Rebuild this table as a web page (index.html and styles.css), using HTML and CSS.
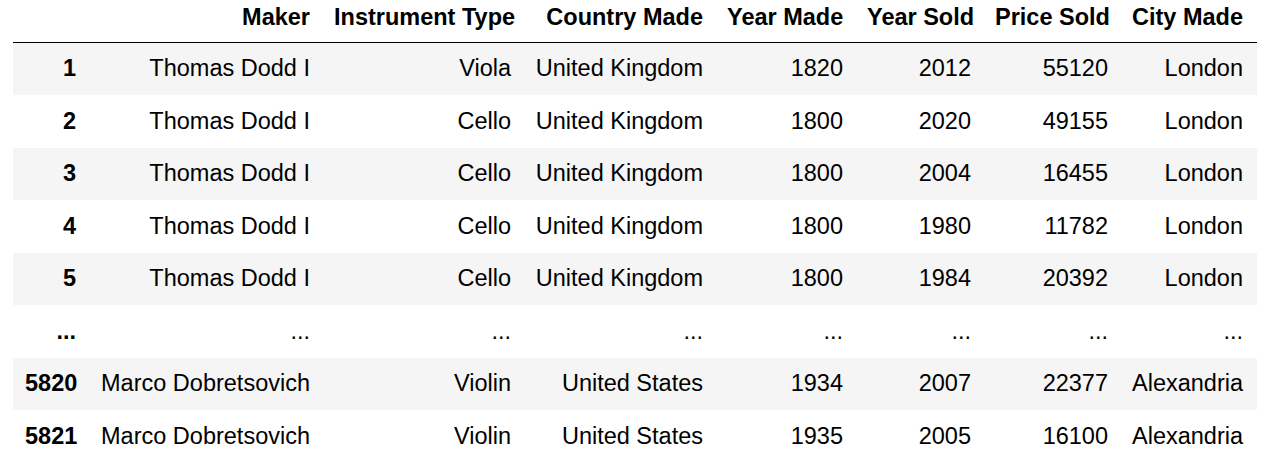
FILE: index.html
```html
<!DOCTYPE html>
<html>
<head>
<meta charset="utf-8">
<link rel="stylesheet" href="styles.css">
</head>
<body>
<table class="df">
  <colgroup>
    <col class="c-idx"><col class="c-maker"><col class="c-type"><col class="c-country"><col class="c-ymade"><col class="c-ysold"><col class="c-price"><col class="c-city">
  </colgroup>
  <thead>
    <tr><th></th><th>Maker</th><th>Instrument Type</th><th>Country Made</th><th>Year Made</th><th>Year Sold</th><th>Price Sold</th><th>City Made</th></tr>
  </thead>
  <tbody>
    <tr><th>1</th><td>Thomas Dodd I</td><td>Viola</td><td>United Kingdom</td><td>1820</td><td>2012</td><td>55120</td><td>London</td></tr>
    <tr><th>2</th><td>Thomas Dodd I</td><td>Cello</td><td>United Kingdom</td><td>1800</td><td>2020</td><td>49155</td><td>London</td></tr>
    <tr><th>3</th><td>Thomas Dodd I</td><td>Cello</td><td>United Kingdom</td><td>1800</td><td>2004</td><td>16455</td><td>London</td></tr>
    <tr><th>4</th><td>Thomas Dodd I</td><td>Cello</td><td>United Kingdom</td><td>1800</td><td>1980</td><td>11782</td><td>London</td></tr>
    <tr><th>5</th><td>Thomas Dodd I</td><td>Cello</td><td>United Kingdom</td><td>1800</td><td>1984</td><td>20392</td><td>London</td></tr>
    <tr><th>...</th><td>...</td><td>...</td><td>...</td><td>...</td><td>...</td><td>...</td><td>...</td></tr>
    <tr><th>5820</th><td>Marco Dobretsovich</td><td>Violin</td><td>United States</td><td>1934</td><td>2007</td><td>22377</td><td>Alexandria</td></tr>
    <tr><th>5821</th><td>Marco Dobretsovich</td><td>Violin</td><td>United States</td><td>1935</td><td>2005</td><td>16100</td><td>Alexandria</td></tr>
  </tbody>
</table>
</body>
</html>
```
FILE: styles.css
```css
html, body {
  margin: 0;
  padding: 0;
  background: #ffffff;
}
body {
  font-family: "Liberation Sans", Arial, Helvetica, sans-serif;
  font-size: 23.5px;
  color: #000000;
}
.df {
  margin-left: 13px;
  border-collapse: collapse;
  border-spacing: 0;
  table-layout: fixed;
  width: 1244px;
}
.c-idx { width: 75px; }
.c-maker { width: 234px; }
.c-type { width: 201px; }
.c-country { width: 192px; }
.c-ymade { width: 140px; }
.c-ysold { width: 128px; }
.c-price { width: 137px; }
.c-city { width: 137px; }
.df th,
.df td {
  text-align: right;
  vertical-align: middle;
  padding: 11.75px 12px 11.75px 12px;
  line-height: 29px;
  white-space: nowrap;
  border: none;
}
.df th:last-child,
.df td:last-child {
  padding-right: 14px;
}
.df th {
  font-weight: bold;
}
.df thead th {
  vertical-align: bottom;
  padding-top: 0;
  padding-bottom: 10px;
  height: 42px;
  box-sizing: border-box;
  border-bottom: 1px solid #000000;
}
.df tbody tr {
  height: 52.5px;
}
.df tbody tr:nth-child(odd) {
  background: #f5f5f5;
}
```
